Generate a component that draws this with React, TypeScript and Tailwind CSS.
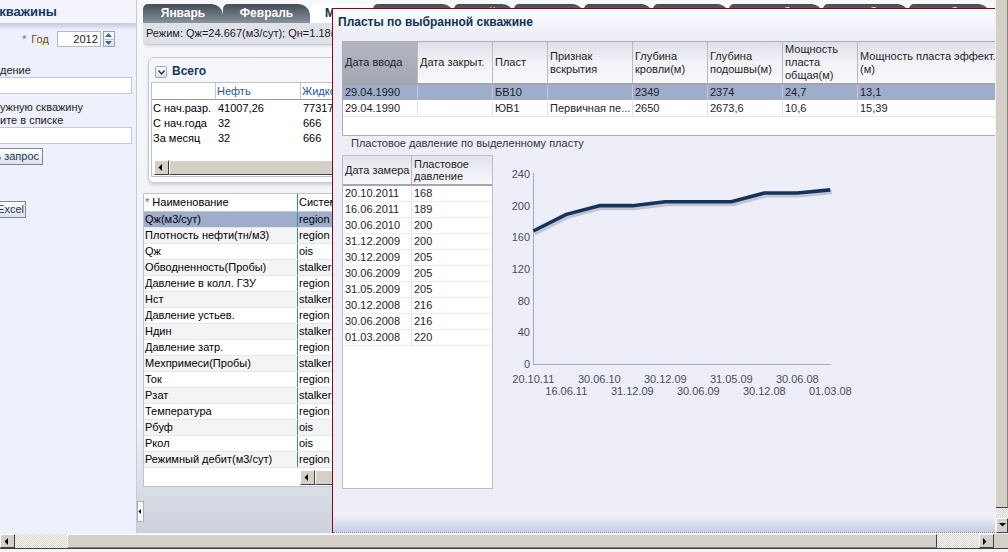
import React from 'react';

const months = ['Январь', 'Февраль', 'Март', 'Апрель', 'Май', 'Июнь', 'Июль', 'Август', 'Сентябрь', 'Октябрь', 'Ноябрь'];
const tabWidths: Record<number, string> = { 0: 'w-[80px] justify-center', 1: 'w-[87px] justify-center', 2: 'pl-[15px] pr-[18px]' };

const totals: [string, string, string][] = [
  ['С нач.разр.', '41007,26', '77317'],
  ['С нач.года', '32', '666'],
  ['За месяц', '32', '666'],
];

const params: [string, string][] = [
  ['Qж(м3/сут)', 'region'],
  ['Плотность нефти(тн/м3)', 'region'],
  ['Qж', 'ois'],
  ['Обводненность(Пробы)', 'stalker'],
  ['Давление в колл. ГЗУ', 'region'],
  ['Нст', 'stalker'],
  ['Давление устьев.', 'region'],
  ['Ндин', 'stalker'],
  ['Давление затр.', 'region'],
  ['Мехпримеси(Пробы)', 'stalker'],
  ['Ток', 'region'],
  ['Рзат', 'stalker'],
  ['Температура', 'region'],
  ['Рбуф', 'ois'],
  ['Ркол', 'ois'],
  ['Режимный дебит(м3/сут)', 'region'],
];

const layerCols: { lines: string[]; w: number }[] = [
  { lines: ['Дата ввода'], w: 75 },
  { lines: ['Дата закрыт.'], w: 75 },
  { lines: ['Пласт'], w: 55 },
  { lines: ['Признак', 'вскрытия'], w: 85 },
  { lines: ['Глубина', 'кровли(м)'], w: 75 },
  { lines: ['Глубина', 'подошвы(м)'], w: 75 },
  { lines: ['Мощность', 'пласта', 'общая(м)'], w: 75 },
  { lines: ['Мощность пласта эффект.', '(м)'], w: 160 },
];

const layerRows: string[][] = [
  ['29.04.1990', '', 'БВ10', '', '2349', '2374', '24,7', '13,1'],
  ['29.04.1990', '', 'ЮВ1', 'Первичная пе...', '2650', '2673,6', '10,6', '15,39'],
];

const pressure: [string, number, string][] = [
  ['20.10.2011', 168, '20.10.11'],
  ['16.06.2011', 189, '16.06.11'],
  ['30.06.2010', 200, '30.06.10'],
  ['31.12.2009', 200, '31.12.09'],
  ['30.12.2009', 205, '30.12.09'],
  ['30.06.2009', 205, '30.06.09'],
  ['31.05.2009', 205, '31.05.09'],
  ['30.12.2008', 216, '30.12.08'],
  ['30.06.2008', 216, '30.06.08'],
  ['01.03.2008', 220, '01.03.08'],
];

const Arrow = ({ dir }: { dir: 'left' | 'right' | 'down' | 'up' }) => {
  const pts = {
    left: '4,0 4,7 0.5,3.5',
    right: '0,0 0,7 3.5,3.5',
    down: '0,1 7,1 3.5,4.5',
    up: '0,4.5 7,4.5 3.5,1',
  }[dir];
  return (
    <svg width="7" height="7" viewBox="0 0 7 7">
      <polygon points={pts} fill="#000" />
    </svg>
  );
};

const SbButton = ({ dir, className = '' }: { dir: 'left' | 'right' | 'down' | 'up'; className?: string }) => (
  <div
    className={`shrink-0 flex items-center justify-center bg-[#d4d0c8] border border-t-[#ffffff] border-l-[#ffffff] border-r-[#404040] border-b-[#404040] ${className}`}
  >
    <Arrow dir={dir} />
  </div>
);

const checker = 'bg-[image:repeating-conic-gradient(#d4d0c8_0%_25%,#ffffff_0%_50%)] bg-[length:2px_2px]';

const LeftPanel = () => (
  <div className="w-[137px] shrink-0 border-r border-[#c5cadb] bg-[#eef0fb] overflow-hidden flex flex-col text-[#1c1c1c]">
    <div className="h-[23px] bg-[#f4f5fc] flex items-center">
      <span className="-ml-[8px] text-[13px] font-bold text-[#0f3a5e] whitespace-nowrap">скважины</span>
    </div>
    <div className="h-[7px] bg-linear-to-b from-[#c2c9df] to-[#eef0fb]" />
    <div className="mt-[1px] h-[16px] flex items-center">
      <span className="ml-[22px] text-[#3c7cc8]">*</span>
      <span className="ml-[5px] text-[#6b5000]">Год</span>
      <div className="ml-[8px] w-[44px] h-[16px] bg-white border border-[#b4bac8] text-right pr-[2px] leading-[14px]">2012</div>
      <div className="ml-[2px] w-[12px] h-[16px] flex flex-col border border-[#9aa3b5] bg-linear-to-b from-white to-[#dde3ee]">
        <div className="flex-1 flex items-center justify-center">
          <svg width="7" height="4" viewBox="0 0 7 4">
            <polygon points="0,4 3.5,0 7,4" fill="#46688c" />
          </svg>
        </div>
        <div className="flex-1 flex items-center justify-center border-t border-[#c0c6d4]">
          <svg width="7" height="4" viewBox="0 0 7 4">
            <polygon points="0,0 7,0 3.5,4" fill="#46688c" />
          </svg>
        </div>
      </div>
    </div>
    <div className="mt-[16px] h-[14px] leading-[14px] whitespace-nowrap">дение</div>
    <div className="-ml-[10px] w-[142px] h-[17px] bg-white border border-[#c3c8d6]" />
    <div className="mt-[7px] leading-[13px] whitespace-nowrap">
      <div>ужную скважину</div>
      <div>ите в списке</div>
    </div>
    <div className="-ml-[10px] w-[142px] h-[17px] bg-white border border-[#c3c8d6]" />
    <div className="mt-[4px] -ml-[10px] w-[53px] h-[17px] flex items-center justify-end pr-[3px] border border-[#7f8796] bg-linear-to-b from-white to-[#dde1eb] text-[#1a3a5c] whitespace-nowrap">
      ь запрос
    </div>
    <div className="mt-[36px] -ml-[10px] w-[36px] h-[17px] flex items-center justify-end pr-[1px] border border-[#7f8796] bg-linear-to-b from-white to-[#dde1eb] text-[#1a3a5c] whitespace-nowrap">
      Excel
    </div>
  </div>
);

const Middle = () => (
  <div className="w-[852px] shrink-0 flex flex-col overflow-hidden">
    <div className="h-[23px] shrink-0 flex items-end">
      {months.map((m, i) => (
        <div
          key={m}
          className={`h-[19px] shrink-0 flex rounded-tl-[5px] rounded-tr-[12px] text-[12px] font-bold leading-[19px] whitespace-nowrap ${
            tabWidths[i] ?? 'px-[18px]'
          } ${i === 2 ? 'bg-white text-[#1e3048]' : 'bg-linear-to-b from-[#434d57] to-[#8a939c] text-white'}`}
        >
          {m}
        </div>
      ))}
    </div>
    <div className="h-[22px] shrink-0 bg-[#dfe1e8] border-b border-[#c9ccd6] rounded-bl-[5px] pl-[3px] leading-[21px] whitespace-nowrap text-[#222] shadow-[0_2px_2px_rgba(0,0,0,0.08)]">
      Режим: Qж=24.667(м3/сут); Qн=1.18(т/сут); Обв=95.2%
    </div>

    {/* Всего */}
    <div className="mt-[12px] ml-[5px] w-[250px] h-[126px] shrink-0 rounded-[6px] border border-[#c6cad6] bg-linear-to-b from-[#f5f6fb] to-white shadow-[0_2px_3px_rgba(0,0,0,0.15)] flex flex-col">
      <div className="h-[24px] shrink-0 flex items-start pt-[8px] pl-[6px]">
        <div className="w-[12px] h-[12px] flex items-center justify-center border border-[#9ea8be] rounded-[2px] bg-linear-to-b from-white to-[#d7deec]">
          <svg width="7" height="5" viewBox="0 0 7 5">
            <polyline points="0.5,0.5 3.5,4 6.5,0.5" fill="none" stroke="#1d2f48" strokeWidth="1.3" />
          </svg>
        </div>
        <span className="ml-[5px] -mt-[2px] text-[12px] font-bold text-[#0f3a5e] leading-[15px]">Всего</span>
      </div>
      <div className="ml-[2px] h-[95px] border border-[#bcc0cc] bg-white flex flex-col overflow-hidden">
        <div className="flex h-[17px] shrink-0 border-b border-[#9a9a9a] leading-[16px]">
          <div className="w-[64px] shrink-0 border-r border-[#c4c4c4]" />
          <div className="w-[85px] shrink-0 border-r border-[#c4c4c4] pl-[1px] text-[#185a9c]">Нефть</div>
          <div className="w-[85px] shrink-0 pl-[1px] text-[#185a9c]">Жидкость</div>
        </div>
        <div className="pt-[1px]">
          {totals.map((r) => (
            <div key={r[0]} className="flex h-[15px] leading-[15px] whitespace-nowrap">
              <div className="w-[64px] shrink-0 pl-[1px]">{r[0]}</div>
              <div className="w-[85px] shrink-0 pl-[2px]">{r[1]}</div>
              <div className="w-[85px] shrink-0 pl-[2px]">{r[2]}</div>
            </div>
          ))}
        </div>
        <div className="mt-auto mb-[1px] ml-[2px] h-[15px] flex">
          <SbButton dir="left" className="w-[15px]" />
          <div className="flex-1 bg-[#d4d0c8] border border-t-[#ffffff] border-l-[#ffffff] border-r-[#404040] border-b-[#404040]" />
        </div>
      </div>
    </div>

    {/* parameters table */}
    <div className="mt-[10px] w-[230px] h-[294px] shrink-0 border border-[#c0c3cc] bg-white flex flex-col">
      <div className="flex h-[18px] shrink-0 border-b border-[#c8c8c8] leading-[17px] whitespace-nowrap">
        <div className="w-[153px] pl-[1px]">
          <span className="text-[#2a7ad0]">*</span> Наименование
        </div>
        <div className="flex-1 border-l border-[#2b8bd2] pl-[1px]">Система</div>
      </div>
      {params.map((p, i) => (
        <div
          key={p[0]}
          className={`flex h-[16px] shrink-0 border-b border-[#e6e6e6] leading-[15px] whitespace-nowrap ${
            i === 0 ? 'bg-[#9dadcb]' : i % 2 === 1 ? 'bg-[#f4f4f4]' : 'bg-white'
          }`}
        >
          <div className="w-[153px] pl-[1px]">{p[0]}</div>
          <div className="flex-1 border-l border-[#2b8bd2] pl-[1px]">{p[1]}</div>
        </div>
      ))}
      <div className="flex mt-[2px] h-[15px] shrink-0">
        <div className="w-[156px]" />
        <SbButton dir="left" className="w-[15px]" />
        <div className="flex-1 bg-[#d4d0c8] border border-t-[#ffffff] border-l-[#ffffff] border-r-[#404040] border-b-[#404040]" />
      </div>
    </div>
  </div>
);

const Chart = () => {
  const yOf = (v: number) => 209 - (v * 190) / 240;
  const xOf = (i: number) => 33.3 + i * 33;
  const pts = pressure.map((p, i) => `${xOf(i)},${yOf(p[1])}`).join(' ');
  const ticks = [240, 200, 160, 120, 80, 40, 0];
  return (
    <svg width="370" height="250" viewBox="0 0 370 250" className="shrink-0 ml-[7px]">
      <line x1="33.5" y1="18" x2="33.5" y2="209.5" stroke="#a3a7c6" />
      <line x1="33" y1="209.5" x2="331" y2="209.5" stroke="#a3a7c6" />
      {ticks.map((t) => (
        <text key={t} x="30" y={yOf(t) + 4} textAnchor="end" fontSize="11" fill="#4b4b5e">
          {t}
        </text>
      ))}
      <polyline
        points={pts}
        fill="none"
        stroke="#6f7890"
        strokeOpacity="0.35"
        strokeWidth="4"
        strokeLinejoin="round"
        transform="translate(1.5,2.5)"
      />
      <polyline points={pts} fill="none" stroke="#14345c" strokeWidth="3.6" strokeLinejoin="round" />
      {pressure.map((p, i) => (
        <text
          key={p[2]}
          x={xOf(i)}
          y={i % 2 === 0 ? 228 : 239.5}
          textAnchor="middle"
          fontSize="11"
          fill="#4b4b5e"
        >
          {p[2]}
        </text>
      ))}
    </svg>
  );
};

const Dialog = () => (
  <div className="absolute left-[332px] top-[8px] w-[663px] h-[525px] border-l border-t border-[#7a0f12] bg-[#eeeef8] overflow-hidden flex flex-col text-[#1e1e1e]">
    <div className="h-[27px] shrink-0 bg-linear-to-b from-[#fbfbfe] to-[#eeeef8] pl-[5px] pt-[6px] text-[12px] font-bold text-[#0d3556] leading-[15px] whitespace-nowrap">
      Пласты по выбранной скважине
    </div>

    <div className="ml-[9px] mt-[5px] w-[720px] h-[95px] shrink-0 border border-[#a9abb5] bg-white flex flex-col">
      <div className="flex h-[43px] shrink-0 border-b-2 border-[#a2a3ac]">
        {layerCols.map((c, i) => (
          <div
            key={i}
            style={{ width: c.w }}
            className={`shrink-0 border-r border-[#b8b9c4] flex flex-col justify-center pl-[2px] leading-[13px] whitespace-nowrap ${
              i === 0 ? 'bg-linear-to-b from-[#b3b6c1] to-[#a4a8b4]' : 'bg-linear-to-b from-[#dfe0ea] via-[#f2f2f7] to-[#f8f8fb]'
            }`}
          >
            {c.lines.map((l) => (
              <div key={l}>{l}</div>
            ))}
          </div>
        ))}
      </div>
      {layerRows.map((r, ri) => (
        <div
          key={ri}
          className={`flex h-[16px] shrink-0 leading-[15px] whitespace-nowrap border-b ${
            ri === 0 ? 'bg-[#9dadcb] border-white' : 'bg-white border-[#e4e4e4]'
          }`}
        >
          {r.map((v, ci) => (
            <div
              key={ci}
              style={{ width: layerCols[ci].w }}
              className={`shrink-0 border-r pl-[2px] ${ri === 0 ? 'border-[#c3ccdd]' : 'border-[#e4e4e4]'}`}
            >
              {v}
            </div>
          ))}
        </div>
      ))}
    </div>

    <div className="h-[13px] mt-[1px] shrink-0 pl-[18px] leading-[13px] text-[#333] whitespace-nowrap">
      Пластовое давление по выделенному пласту
    </div>

    <div className="flex mt-[5px] shrink-0">
      <div className="ml-[9px] w-[151px] h-[334px] shrink-0 border border-[#bdbdc4] bg-white flex flex-col">
        <div className="flex h-[30px] shrink-0 border-b-2 border-[#a6a6ae] bg-linear-to-b from-[#e3e4ec] to-[#f8f8fb] leading-[12px] whitespace-nowrap">
          <div className="w-[69px] border-r border-[#b8b9c4] flex items-center pl-[2px]">Дата замера</div>
          <div className="flex-1 flex flex-col justify-center pl-[2px]">
            <div>Пластовое</div>
            <div>давление</div>
          </div>
        </div>
        {pressure.map((p) => (
          <div key={p[0]} className="flex h-[16px] shrink-0 border-b border-[#ececec] leading-[15px]">
            <div className="w-[69px] border-r border-[#e2e2e2] pl-[2px]">{p[0]}</div>
            <div className="flex-1 pl-[2px]">{p[1]}</div>
          </div>
        ))}
      </div>
      <Chart />
    </div>

    <div className="mt-auto h-[17px] shrink-0 bg-linear-to-b from-[#eeeef8] to-[#c7cee3] border-b border-dotted border-[#8a78a0]" />
  </div>
);

export default function App() {
  return (
    <div className="font-['Liberation_Sans',Arial,sans-serif] text-[11px] w-[1008px] h-[552px] overflow-hidden flex flex-col bg-[#eef0fb]">
      <div className="flex h-[533px] shrink-0">
        <div className="relative flex w-[995px] overflow-hidden">
          <LeftPanel />
          <div className="flex flex-1 bg-linear-to-b from-[#f7f8fb] via-[#eef0f5] via-80% to-[#ccd1dc]">
            <div className="w-[6px] shrink-0 flex flex-col justify-end pb-[11px]">
              <div className="h-[21px] w-[7px] flex items-center justify-center bg-white border border-[#a7adbd]">
                <Arrow dir="left" />
              </div>
            </div>
            <Middle />
          </div>
          <Dialog />
        </div>
        <div className="w-[13px] shrink-0 flex flex-col border-l border-[#f2f1ee]">
          <div className="flex-1 bg-[#d4d0c8] border-b border-[#404040] border-r border-r-[#808080]" />
          <div className={`h-[10px] ${checker}`} />
          <SbButton dir="down" className="h-[15px]" />
        </div>
      </div>
      <div className="h-[16px] shrink-0 flex border-t border-[#f2f1ee] border-b border-b-[#404040]">
        <SbButton dir="left" className="w-[15px]" />
        <div className={`w-[52px] ${checker}`} />
        <div className="w-[870px] bg-[#d4d0c8] border border-t-[#ffffff] border-l-[#ffffff] border-r-[#404040] border-b-[#808080]" />
        <div className={`flex-1 ${checker}`} />
        <SbButton dir="right" className="w-[15px]" />
        <div className="w-[14px] bg-[#d4d0c8]" />
      </div>
      <div className="flex-1 bg-[#f4f5fb]" />
    </div>
  );
}
